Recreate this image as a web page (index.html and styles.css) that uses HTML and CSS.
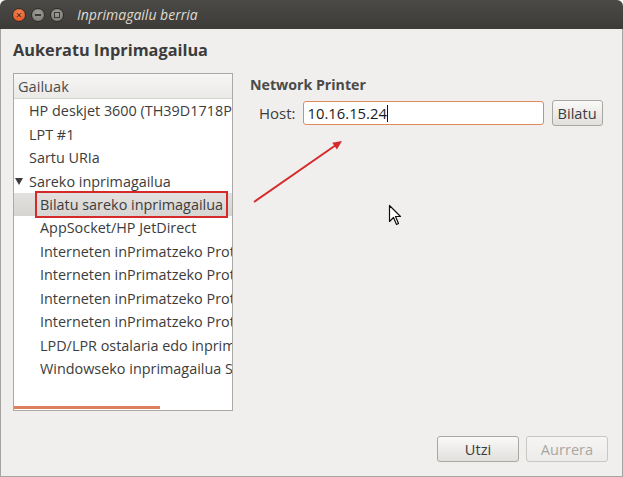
FILE: index.html
```html
<!DOCTYPE html>
<html lang="eu">
<head>
    <meta charset="UTF-8">
    <title>Inprimagailu berria</title>
    <link rel="stylesheet" href="styles.css">
</head>
<body>
    <div class="window">
        <div class="titlebar">
            <span class="wm-btn close">&#215;</span>
            <span class="wm-btn min"></span>
            <span class="wm-btn max"></span>
            <span class="title">Inprimagailu berria</span>
        </div>

        <div class="dialog">
            <h1>Aukeratu Inprimagailua</h1>

            <div class="main">
                <div class="device-list">
                    <div class="list-header">Gailuak</div>
                    <div class="list-rows">
                        <div class="item">HP deskjet 3600 (TH39D1718P0)</div>
                        <div class="item">LPT #1</div>
                        <div class="item">Sartu URIa</div>
                        <div class="item"><span class="expander"></span>Sareko inprimagailua</div>
                        <div class="item child selected"><span class="marked">Bilatu sareko inprimagailua</span></div>
                        <div class="item child">AppSocket/HP JetDirect</div>
                        <div class="item child">Interneten inPrimatzeko Protokoloa (ipp)</div>
                        <div class="item child">Interneten inPrimatzeko Protokoloa (https)</div>
                        <div class="item child">Interneten inPrimatzeko Protokoloa (ipps)</div>
                        <div class="item child">Interneten inPrimatzeko Protokoloa (http)</div>
                        <div class="item child">LPD/LPR ostalaria edo inprimagailua</div>
                        <div class="item child">Windowseko inprimagailua SAMBA bidez</div>
                    </div>
                    <div class="hscroll"><div class="hscroll-bar"></div></div>
                </div>

                <div class="details">
                    <h2>Network Printer</h2>
                    <div class="host-row">
                        <label for="host">Host:</label>
                        <div class="entry" id="host"><span class="caret">10.16.15.24</span></div>
                        <button class="btn">Bilatu</button>
                    </div>
                </div>
            </div>

            <div class="actions">
                <button class="btn wide">Utzi</button>
                <button class="btn wide" disabled>Aurrera</button>
            </div>
        </div>

        <!-- annotations drawn over the screenshot -->
        <svg class="overlay" width="623" height="477" viewBox="0 0 623 477">
            <line x1="254" y1="202" x2="336" y2="145" stroke="#d42a2a" stroke-width="2"/>
            <polygon points="342,141 336.9,149.4 332.3,142.8" fill="#d42a2a"/>
            <path d="M389.5 205.5 L389.5 221.5 L393.5 217.5 L396.5 224.5 L398.5 223.5 L395.5 216.5 L400.5 216.5 Z" fill="#ffffff" stroke="#111111" stroke-width="1.2" stroke-linejoin="round"/>
        </svg>
    </div>
</body>
</html>
```

FILE: styles.css
```css
body {
    margin: 0;
    background-color: #ffffff;
    font-family: "Open Sans", "DejaVu Sans", sans-serif;
}

.window {
    position: relative;
    width: 623px;
    height: 477px;
}

.titlebar {
    height: 29px;
    display: flex;
    align-items: center;
    padding-left: 12px;
    gap: 5px;
    background: linear-gradient(#4b4a46, #3c3b37);
    border-radius: 6px 6px 0 0;
    box-sizing: border-box;
}

.wm-btn {
    width: 14px;
    height: 14px;
    border-radius: 50%;
    display: flex;
    align-items: center;
    justify-content: center;
    box-sizing: border-box;
    font-size: 11px;
    line-height: 1;
    color: #4a2010;
}

.close {
    background: radial-gradient(circle at 50% 35%, #f5885a, #df4b17);
    border: 1px solid #2f2e2b;
}

.min, .max {
    background: radial-gradient(circle at 50% 35%, #a09e98, #77756f);
    border: 1px solid #2f2e2b;
    position: relative;
}

.min::after {
    content: "";
    width: 6px;
    height: 2px;
    background-color: #3a3935;
}

.max::after {
    content: "";
    width: 4px;
    height: 4px;
    border: 1px solid #3a3935;
}

.title {
    margin-left: 8px;
    color: #dfdbd2;
    font-style: italic;
    font-size: 14px;
}

.dialog {
    height: 448px;
    box-sizing: border-box;
    background-color: #f0efed;
    border: 1px solid #a6a4a0;
    border-top: none;
    padding: 0 14px 14px 12px;
    display: flex;
    flex-direction: column;
}

h1 {
    margin: 11px 0 13px 0;
    font-size: 16.3px;
    line-height: 20px;
    font-weight: bold;
    color: #3c3c3c;
}

.main {
    height: 338px;
    display: flex;
    gap: 17px;
}

.device-list {
    width: 220px;
    box-sizing: border-box;
    border: 1px solid #aaa9a6;
    background-color: #ffffff;
    display: flex;
    flex-direction: column;
    overflow: hidden;
}

.list-header {
    height: 25px;
    box-sizing: border-box;
    padding-left: 4px;
    display: flex;
    align-items: center;
    font-size: 14.6px;
    color: #4c4c4c;
    background: linear-gradient(#f6f6f5, #ebeae8);
    border-bottom: 1px solid #d4d3d0;
}

.list-rows {
    flex: 1;
    overflow: hidden;
}

.item {
    height: 23.45px;
    display: flex;
    align-items: center;
    padding-left: 15px;
    white-space: nowrap;
    font-size: 14.4px;
    color: #3c3c3c;
}

.child {
    padding-left: 26px;
}

.selected {
    background: linear-gradient(#e2e1df, #d6d5d2);
}

.marked {
    border: 2px solid #d52a2a;
    padding: 1px 3px;
    margin-left: -5px;
    line-height: 21px;
}

.expander {
    width: 0;
    height: 0;
    border-left: 4px solid transparent;
    border-right: 4px solid transparent;
    border-top: 7px solid #3c3c3c;
    margin-left: -14px;
    margin-right: 6px;
}

.hscroll {
    height: 4px;
}

.hscroll-bar {
    width: 146px;
    height: 3px;
    background-color: #dd7f5c;
}

.details {
    flex: 1;
}

h2 {
    margin: 3px 0 6px 0;
    font-size: 14.2px;
    line-height: 18px;
    font-weight: bold;
    color: #4a4a4a;
}

.host-row {
    display: flex;
    align-items: center;
    padding-left: 9px;
}

.host-row label {
    font-size: 15px;
    color: #3c3c3c;
    margin-right: 7px;
}

.entry {
    width: 241px;
    height: 24px;
    box-sizing: border-box;
    border: 1px solid #e08a5c;
    border-radius: 3px;
    background-color: #ffffff;
    padding-left: 4px;
    display: flex;
    align-items: center;
    font-size: 14.8px;
    color: #1a1a1a;
    margin-right: 8px;
}

.caret {
    border-right: 1px solid #111111;
    line-height: 17px;
}

.btn {
    height: 26px;
    padding: 0 5px;
    font-family: inherit;
    font-size: 14.6px;
    color: #3c3c3c;
    border: 1px solid #a9a7a3;
    border-radius: 3px;
    background: linear-gradient(#f9f9f8, #e1e0dd);
    cursor: pointer;
}

.btn:disabled {
    color: #a9a7a2;
    border-color: #c9c7c3;
    background: linear-gradient(#f6f5f4, #ecebe9);
    cursor: default;
}

.actions {
    margin-top: auto;
    display: flex;
    justify-content: flex-end;
    gap: 7px;
}

.wide {
    width: 82px;
}

.overlay {
    position: absolute;
    top: 0;
    left: 0;
    pointer-events: none;
}
```
